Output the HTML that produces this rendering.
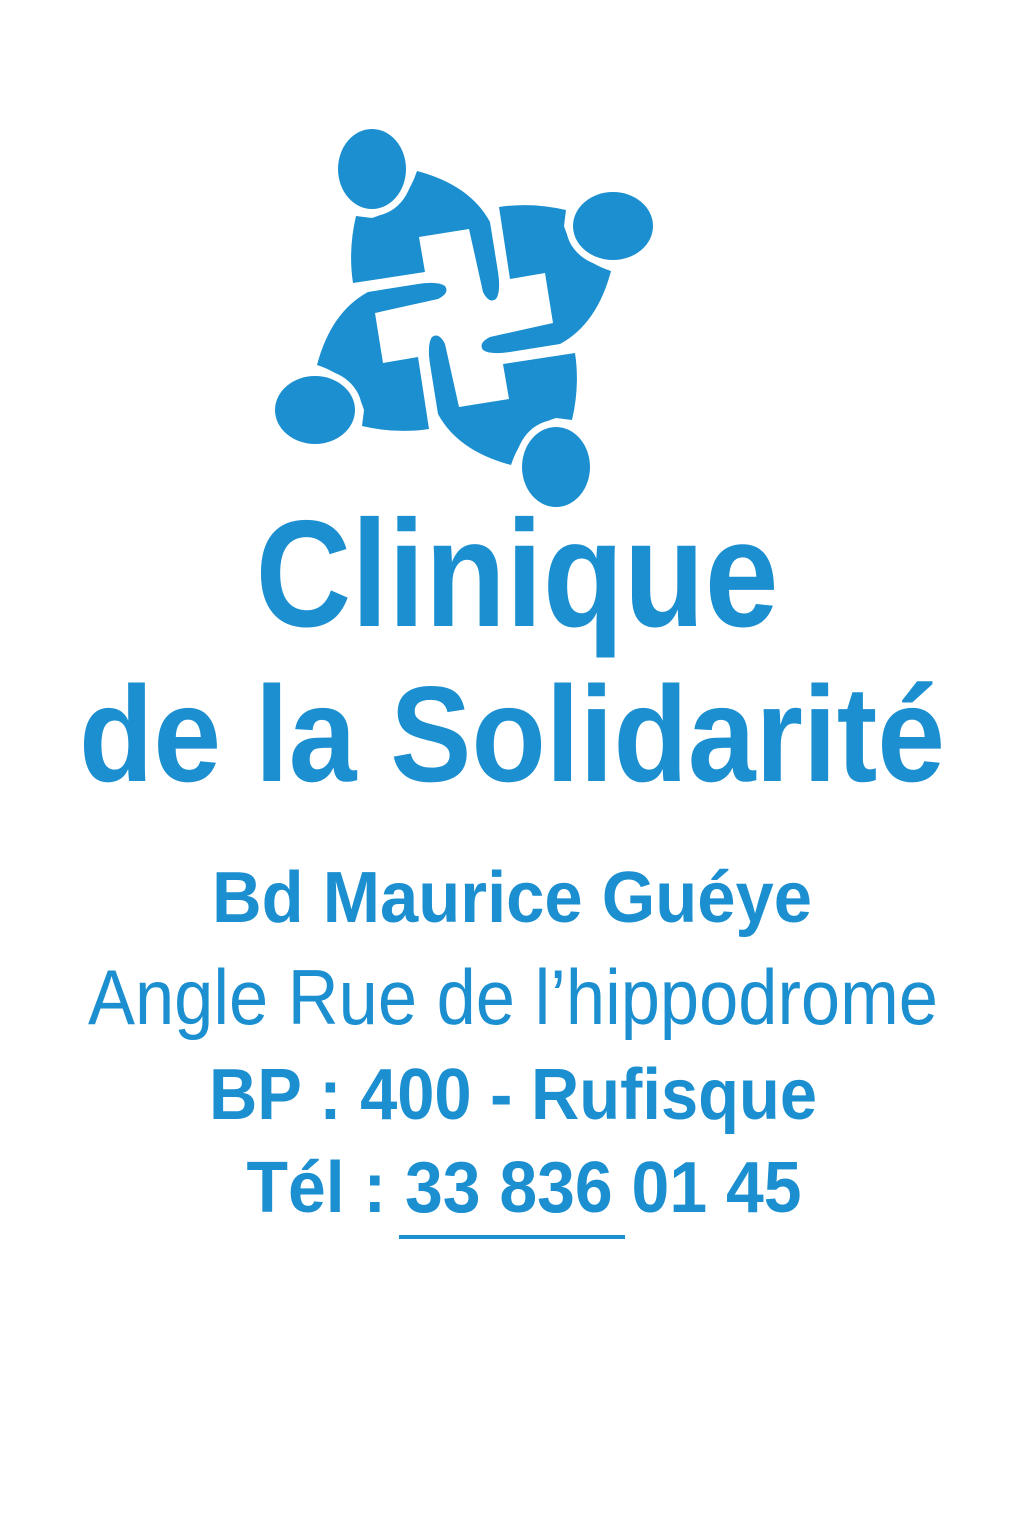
<!DOCTYPE html>
<html><head><meta charset="utf-8"><style>
html,body{margin:0;padding:0;background:#fff;width:1024px;height:1536px;overflow:hidden}
svg{display:block}
text{font-family:"Liberation Sans",Arial,sans-serif;fill:#1b8fd0}
</style></head><body>
<svg width="1024" height="1536" viewBox="0 0 1024 1536">
<defs>
<g id="fig">
<path d="M353,283 L425,272 L419,237 L469,229 L483,292 Q489,304 496,299 Q501,292 498,272 L490,222 Q470,185 417,171 Q405,208 372,218 L356,216 Q348,250 353,283 Z" fill="#1b8fd0"/>
<ellipse cx="372" cy="169" rx="41" ry="47" fill="#fff"/>
<ellipse cx="372" cy="169" rx="34" ry="40" fill="#1b8fd0"/>
</g>
</defs>
<use href="#fig"/>
<use href="#fig" transform="rotate(90 464 318)"/>
<use href="#fig" transform="rotate(180 464 318)"/>
<use href="#fig" transform="rotate(270 464 318)"/>
<text x="517" y="626" font-size="152" font-weight="bold" text-anchor="middle" textLength="523" lengthAdjust="spacingAndGlyphs">Clinique</text>
<text x="512" y="781" font-size="136" font-weight="bold" text-anchor="middle" textLength="866" lengthAdjust="spacingAndGlyphs">de la Solidarité</text>
<text x="512" y="922" font-size="72" font-weight="bold" text-anchor="middle" textLength="600" lengthAdjust="spacingAndGlyphs">Bd Maurice Guéye</text>
<text x="513" y="1024" font-size="78" text-anchor="middle" textLength="850" lengthAdjust="spacingAndGlyphs">Angle Rue de l’hippodrome</text>
<text x="513" y="1119" font-size="72" font-weight="bold" text-anchor="middle" textLength="608" lengthAdjust="spacingAndGlyphs">BP : 400 - Rufisque</text>
<text x="524" y="1212" font-size="72" font-weight="bold" text-anchor="middle" textLength="555" lengthAdjust="spacingAndGlyphs">Tél : 33 836 01 45</text>
<rect x="399" y="1235" width="226" height="4" fill="#1b8fd0"/>
</svg>
</body></html>
